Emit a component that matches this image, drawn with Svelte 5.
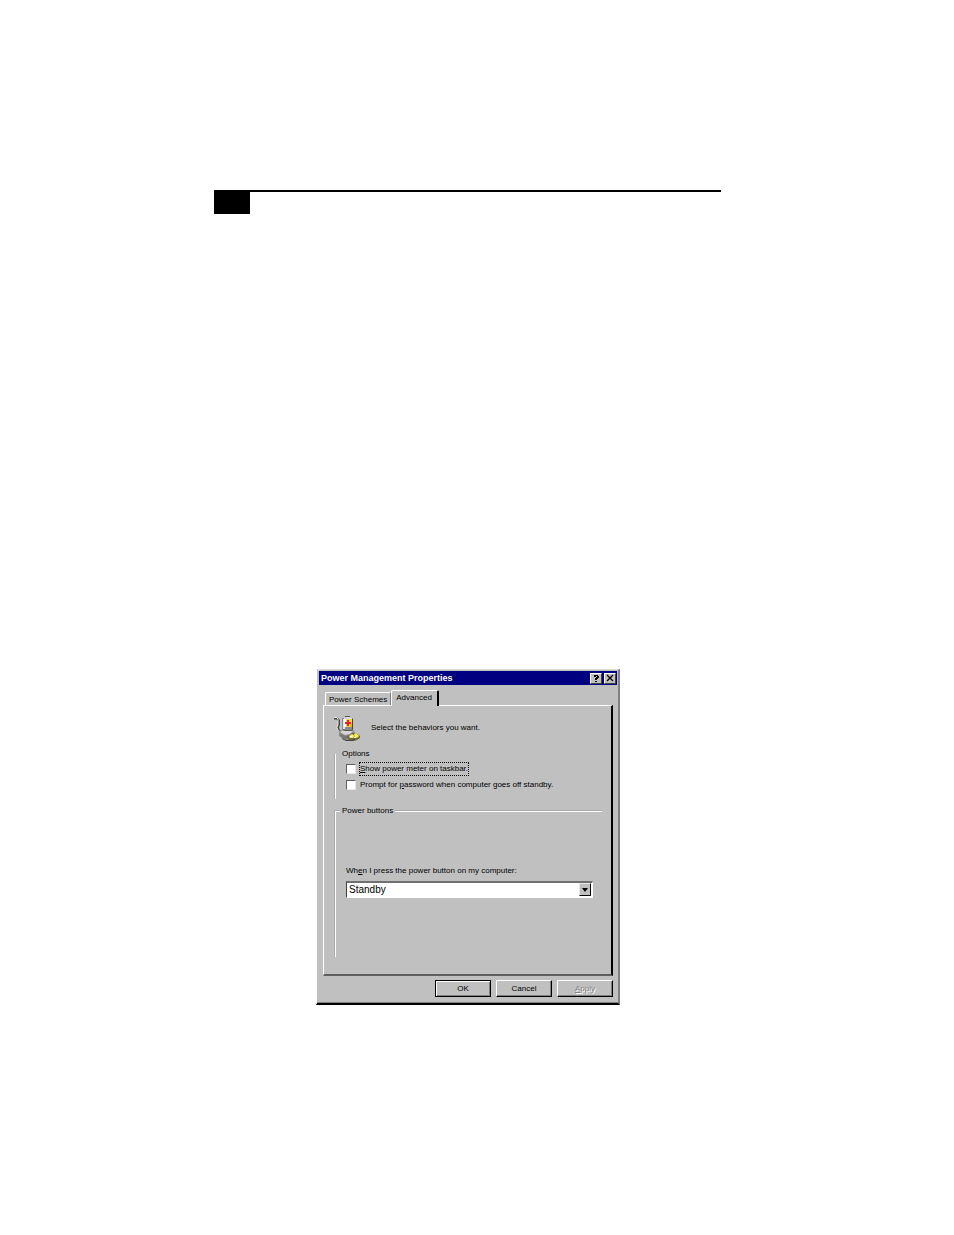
<script>
  let tab = $state('advanced');
  let showMeter = $state(false);
  let askPassword = $state(false);
  let action = $state('standby');
</script>

<main>
  <header><div class="marker"></div></header>

  <section class="dialog" aria-labelledby="title">
    <div class="titlebar">
      <h1 id="title">Power Management Properties</h1>
      <button class="cap" aria-label="Help">
        <svg width="8" height="8" viewBox="0 0 8 8" shape-rendering="crispEdges"><path d="M2 1h4v1h1v2h-1v1h-1v1h-2v-2h1v-1h1v-1h-1v1h-2v-1h-1zM3 7h2v1h-2z" /></svg>
      </button>
      <button class="cap" aria-label="Close">
        <svg width="8" height="8" viewBox="0 0 8 8"><path d="M1 1l6 6M7 1l-6 6" fill="none" stroke="#000" stroke-width="1.3" /></svg>
      </button>
    </div>

    <div class="tabs" role="tablist">
      <button role="tab" class="tab" class:active={tab === 'schemes'} aria-selected={tab === 'schemes'} onclick={() => (tab = 'schemes')}>Power Schemes</button>
      <button role="tab" class="tab" class:active={tab === 'advanced'} aria-selected={tab === 'advanced'} onclick={() => (tab = 'advanced')}>Advanced</button>
    </div>

    <div class="panel" role="tabpanel">
      <div class="intro">
        <svg width="28" height="26" viewBox="0 2 28 26" aria-hidden="true">
          <path d="M2 4.500h3l2 2v4l-1 3 1 3 4 3" fill="none" stroke="#444" stroke-width="2" />
          <path d="M2 3.500h3l1 2v5l-1 3 1 3 4 2" fill="none" stroke="#e4e4e4" />
          <path d="M7 18l4-3h10l2 4-2 5-4 2h-4l-6-4z" fill="#8c8c8c" />
          <path d="M8 18l4-2 9 1-3 3-5 1z" fill="#d6d6d6" />
          <path d="M8 20l5 2 4-1v3l-4 1-5-3z" fill="#777" />
          <path d="M10 4h11v11l-2 2h-7l-2-2z" fill="#8a8a8a" />
          <path d="M11 5h2v10h-2z" fill="#e4e4e4" />
          <path d="M12 5h8v8h-8z" fill="#f0dc50" />
          <path d="M12 5h2v8h-2z" fill="#fff" />
          <path d="M18 10h2v3h-2z" fill="#e0bd18" />
          <path d="M20 5h1v10h-1z" fill="#444" />
          <path d="M15 6h2v2h2v2h-2v2h-2v-2h-2v-2h2z" fill="#ee2020" />
          <path d="M12 4h2v-1h4v1h2v1h-8z" fill="#ddd" />
          <path d="M13 2.500h5" stroke="#555" />
          <path d="M11 15.500l2 1h6l2-1" fill="none" stroke="#555" />
          <path d="M15 23l5-4 4 0 4 3v2l-3 2-3 1h-5z" fill="#6f6b3a" />
          <path d="M17 22l3-2 3 2-2 2h-3z" fill="#f3ef60" />
          <path d="M22 20l2-1 3 3-2 2-2-1z" fill="#f3ef60" />
          <path d="M18 22h2v1h-2zM22 23h2v1h-2z" fill="#fff" />
          <path d="M10 24.500l4 2h6l3-1" fill="none" stroke="#444" />
        </svg>
        <p>Select the behaviors you want.</p>
      </div>

      <fieldset class="options">
        <legend>Options</legend>
        <label class="check"><input type="checkbox" bind:checked={showMeter} /><span class="focus"><u>S</u>how power meter on taskbar.</span></label>
        <label class="check"><input type="checkbox" bind:checked={askPassword} /><span>Prompt for <u>p</u>assword when computer goes off standby.</span></label>
      </fieldset>

      <fieldset class="power">
        <legend>Power buttons</legend>
        <label class="prompt" for="press">Wh<u>e</u>n I press the power button on my computer:</label>
        <div class="combo">
          <select id="press" bind:value={action}>
            <option value="standby">Standby</option>
            <option value="off">Shut down</option>
          </select>
          <span class="drop" aria-hidden="true"><svg width="6" height="4" viewBox="0 0 6 4"><path d="M0 0h6l-3 4z" /></svg></span>
        </div>
      </fieldset>
    </div>

    <footer>
      <button class="push default">OK</button>
      <button class="push">Cancel</button>
      <button class="push" disabled><u>A</u>pply</button>
    </footer>
  </section>
</main>

<style>
  :global(body) { margin: 0; background: #fff; }
  * { box-sizing: border-box; }
  main {
    padding: 190px 233px 230px 214px;
    font: 8px/12px "Liberation Sans", Arial, sans-serif;
    color: #000;
  }
  header { border-top: 2px solid #000; }
  .marker { width: 36px; height: 22px; background: #000; }
  button, select { font: inherit; color: inherit; border-radius: 0; margin: 0; padding: 0; }
  u { text-underline-offset: 1px; text-decoration-thickness: 1px; }

  .dialog {
    margin: 455px 101px 0 102px;
    padding: 1px 1px 6px 2px;
    background: #c0c0c0;
    border: 1px solid #fff;
    border-top-color: #dfdfdf;
    border-right: 2px solid #808080;
    border-bottom: 2px solid #000;
    box-shadow: inset 0 -1px #808080;
  }
  .titlebar {
    display: flex;
    align-items: center;
    gap: 2px;
    height: 14px;
    padding: 0 1px 0 2px;
    background: #000080;
  }
  h1 { flex: 1; margin: 0; font: bold 9px/14px "Liberation Sans", Arial, sans-serif; color: #fff; }
  .cap {
    display: grid;
    place-items: center;
    width: 12px;
    height: 11px;
    background: #c0c0c0;
    border: 1px solid;
    border-color: #fff #404040 #404040 #fff;
  }
  .cap svg { display: block; }

  .tabs { display: flex; align-items: flex-end; height: 20px; padding: 0 6px; }
  .tab {
    height: 13px;
    padding: 1px 3px 0;
    line-height: 12px;
    background: #c0c0c0;
    border: 1px solid #fff;
    border-bottom: 0;
    border-radius: 2px 2px 0 0;
    border-right-color: #808080;
  }
  .tab.active {
    position: relative;
    height: 16px;
    margin-bottom: -1px;
    padding: 0 5px 2px 4px;
    border-right: 2px solid #000;
  }

  .panel {
    margin: 0 4px;
    padding: 10px 9px 17px 10px;
    border: 1px solid #fff;
    border-right: 2px solid #000;
    border-bottom: 2px solid #606060;
  }
  .intro { display: flex; align-items: flex-start; gap: 11px; height: 26px; }
  .intro svg { flex: none; margin-left: -2px; }
  .intro p { margin: 6px 0 0; }

  fieldset { margin: 0; padding: 0 9px 0 10px; border: 0 solid; min-width: 0; }
  legend { padding: 0 2px; margin-left: -6px; height: 12px; }
  .options {
    margin-top: 6px;
    padding-bottom: 7px;
    border-left: 2px groove #fff;
  }
  .power {
    margin-top: 6px;
    padding-bottom: 59px;
    border-left: 2px groove #fff;
    border-top: 2px groove #fff;
  }
  .check { display: flex; align-items: center; gap: 4px; height: 14px; margin-top: 2px; }
  .check input {
    appearance: none;
    flex: none;
    width: 10px;
    height: 10px;
    margin: 0;
    background: #fff;
    border: 1px solid;
    border-color: #606060 #e8e8e8 #e8e8e8 #606060;
  }
  .check input:checked { background: #000; }
  .focus { outline: 1px dotted #000; }
  .prompt { display: block; margin-top: 48px; }
  .combo { position: relative; margin-top: 4px; }
  select {
    display: block;
    appearance: none;
    width: 100%;
    height: 17px;
    padding: 0 16px 0 2px;
    font: 10px/12px "Liberation Sans", Arial, sans-serif;
    background: #fff;
    border: 1px solid #fff;
    border-top: 2px solid #707070;
    border-left-color: #404040;
  }
  .drop {
    position: absolute;
    top: 2px;
    right: 2px;
    display: grid;
    place-items: center;
    width: 12px;
    height: 13px;
    background: #c0c0c0;
    border: 1px solid;
    border-color: #e8e8e8 #000 #000 #e8e8e8;
    pointer-events: none;
  }

  footer { display: flex; justify-content: flex-end; gap: 5px; padding: 4px 4px 0; }
  .push {
    width: 56px;
    height: 17px;
    background: #c0c0c0;
    border: 1px solid;
    border-color: #fff #000 #000 #fff;
    box-shadow: inset -1px -1px #808080;
  }
  .default { border-color: #000; box-shadow: inset 1px 1px #fff, inset -1px -1px #808080; }
  .push:disabled { color: #808080; text-shadow: 1px 1px #fff; }
</style>
